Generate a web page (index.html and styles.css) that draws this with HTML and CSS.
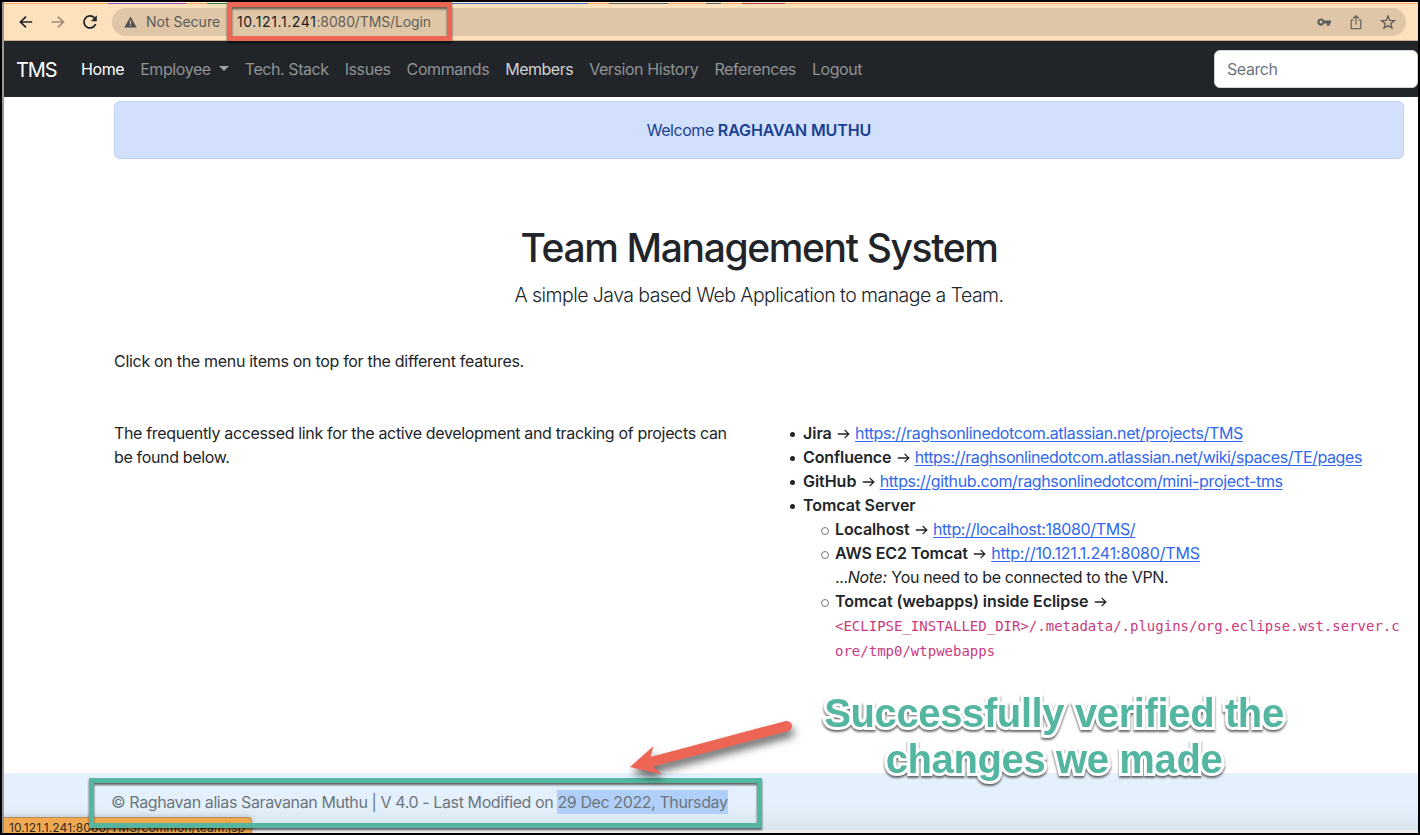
FILE: index.html
```
<!DOCTYPE html>
<html lang="en">
<head>
<meta charset="utf-8">
<title>Team Management System</title>
<link rel="stylesheet" href="styles.css">
</head>
<body>
<div class="window">
  <div class="tab-edge">
    <i class="seg purple"></i><i class="seg green"></i><i class="seg blue"></i><i class="seg gray"></i><i class="seg gray-short"></i><i class="seg red"></i>
  </div>
  <div class="toolbar">
    <svg class="tool-icon" viewBox="0 0 16 16"><path d="M14.2 8H2.6M8 2.6 2.4 8 8 13.4" fill="none" stroke="#222427" stroke-width="1.7"/></svg>
    <svg class="tool-icon" viewBox="0 0 16 16"><path d="M1.6 8h11.6M7.8 2.6 13.4 8l-5.6 5.4" fill="none" stroke="#9a8b79" stroke-width="1.6"/></svg>
    <svg class="tool-icon" viewBox="0 0 16 16"><path d="M13.6 10A6 6 0 1 1 12.4 3.9" fill="none" stroke="#222427" stroke-width="1.8"/><path d="M14.8 1.2v6H8.8z" fill="#222427"/></svg>
    <div class="omnibox">
      <svg class="warn" viewBox="0 0 14 12"><path fill-rule="evenodd" d="M7 0 13.6 12H.4zM6.3 4.3v3.6h1.4V4.3zm0 4.7v1.4h1.4V9z" fill="#4f5257"/></svg>
      <span class="not-secure">Not Secure</span>
      <span class="url"><span class="host">10.121.1.241</span><span class="path">:8080/TMS/Login</span></span>
      <span class="omni-icons">
        <svg width="16" height="16" viewBox="0 0 16 16"><path fill-rule="evenodd" d="M5 4.4A3.6 3.6 0 0 1 8.3 6.5H15v3h-1.3v2.2h-2.8V9.5H8.3A3.6 3.6 0 1 1 5 4.4zM5 6.6A1.4 1.4 0 1 0 5 9.4A1.4 1.4 0 0 0 5 6.6z" fill="#5d5c5c"/></svg>
        <svg width="16" height="16" viewBox="0 0 16 16"><path d="M5.4 6H3.2v8.600h9.600V6h-2.200M8 10.400V2M5.200 4.500 8 1.700l2.800 2.800" fill="none" stroke="#696560" stroke-width="1.25" stroke-linejoin="round"/></svg>
        <svg width="16" height="16" viewBox="0 0 16 16"><path d="m8 2 1.700 4.300 4.700.3-3.600 3 1.150 4.500L8 11.600l-3.950 2.500L5.200 9.600l-3.600-3 4.700-.3z" fill="none" stroke="#605d5a" stroke-width="1.35"/></svg>
      </span>
    </div>
  </div>

  <nav class="navbar">
    <a class="brand">TMS</a>
    <a class="nav-link active">Home</a>
    <a class="nav-link dropdown">Employee</a>
    <a class="nav-link">Tech. Stack</a>
    <a class="nav-link">Issues</a>
    <a class="nav-link">Commands</a>
    <a class="nav-link hovered">Members</a>
    <a class="nav-link">Version History</a>
    <a class="nav-link">References</a>
    <a class="nav-link">Logout</a>
    <div class="search">Search</div>
  </nav>

  <main class="content">
    <div class="alert">Welcome <b>RAGHAVAN MUTHU</b></div>
    <h1>Team Management System</h1>
    <p class="lead">A simple Java based Web Application to manage a Team.</p>
    <p class="intro">Click on the menu items on top for the different features.</p>
    <div class="columns">
      <p class="links-intro">The frequently accessed link for the active development and tracking of projects can<br>be found below.</p>
      <ul>
        <li><b>Jira</b> <svg class="arr" viewBox="0 0 13 10"><path d="M.8 5h11M7.600.9 11.800 5 7.600 9.100"/></svg> <a class="jira">https://raghsonlinedotcom.atlassian.net/projects/TMS</a></li>
        <li><b class="conf">Confluence</b> <svg class="arr" viewBox="0 0 13 10"><path d="M.8 5h11M7.600.9 11.800 5 7.600 9.100"/></svg> <a class="wiki">https://raghsonlinedotcom.atlassian.net/wiki/spaces/TE/pages</a></li>
        <li><b>GitHub</b> <svg class="arr" viewBox="0 0 13 10"><path d="M.8 5h11M7.600.9 11.800 5 7.600 9.100"/></svg> <a class="jira">https://github.com/raghsonlinedotcom/mini-project-tms</a></li>
        <li><b>Tomcat Server</b>
          <ul>
            <li><b class="conf">Localhost</b> <svg class="arr" viewBox="0 0 13 10"><path d="M.8 5h11M7.600.9 11.800 5 7.600 9.100"/></svg> <a>http://localhost:18080/TMS/</a></li>
            <li><b class="aws">AWS EC2 Tomcat</b> <svg class="arr" viewBox="0 0 13 10"><path d="M.8 5h11M7.600.9 11.800 5 7.600 9.100"/></svg> <a class="ec2">http://10.121.1.241:8080/TMS</a><br>...<i>Note:</i> <span class="vpn">You need to be connected to the VPN.</span></li>
            <li><b>Tomcat (webapps) inside Eclipse</b> <svg class="arr" viewBox="0 0 13 10"><path d="M.8 5h11M7.600.9 11.800 5 7.600 9.100"/></svg><br><code>&lt;ECLIPSE_INSTALLED_DIR&gt;/.metadata/.plugins/org.eclipse.wst.server.c<br>ore/tmp0/wtpwebapps</code></li>
          </ul>
        </li>
      </ul>
    </div>
  </main>

  <footer class="footer"><span class="credit">© Raghavan alias Saravanan Muthu | V 4.0 - Last Modified on <mark>29 Dec 2022, Thursday</mark></span></footer>
</div>

<div class="status">10.121.1.241:8080/TMS/common/team.jsp</div>
<div class="callout callout-url"></div>
<div class="callout callout-footer"></div>
<svg class="arrow" viewBox="0 0 200 80"><path d="M20 57 43.500 36 40.500 47 175 11.200A5 5 0 0 1 178.500 21L43.500 56.500 51.500 64.500z" fill="#ec6555"/></svg>
<div class="note">Successfully verified the<br>changes we made</div>
</body>
</html>
```
FILE: styles.css
```
* { box-sizing: border-box; }
body {
  display: flow-root;
  margin: 0;
  width: 1420px;
  height: 835px;
  overflow: hidden;
  position: relative;
  background: #000;
  color: #212529;
  font: 16px/24px Inter, sans-serif;
  letter-spacing: -0.34px;
}
h1, p, ul { margin: 0; }
b { font-weight: 600; letter-spacing: -0.04px; }

.window {
  display: flex;
  flex-direction: column;
  width: 1416px;
  height: 831px;
  margin: 2px;
  border-left: 2px solid #97979a;
  background: #fff;
}

/* browser chrome */
.tab-edge {
  flex: none;
  display: flex;
  height: 2px;
  border-top: 1px solid #fff3e4;
  background: #f8a54b;
}
.seg { height: 1px; }
.purple { margin-left: 104px; width: 78px; background: #9150b5; }
.green { margin-left: 21px; width: 30px; background: #2e7d48; }
.blue { margin-left: 190px; width: 161px; background: #466cc0; }
.gray { margin-left: 21px; width: 59px; background: #625e58; }
.gray-short { margin-left: 38px; width: 15px; background: #5e5b58; }
.red { margin-left: 21px; width: 43px; background: #bb3c31; }
.toolbar {
  flex: none;
  display: flex;
  align-items: center;
  height: 37px;
  padding: 0 12px 0 14px;
  background: #fde0bc;
  border-bottom: 1px solid #c9b18f;
}
.tool-icon { width: 16px; height: 16px; margin-right: 16px; flex: none; }
.tool-icon:nth-child(3) { margin-right: 14px; }
.omnibox {
  flex: 1;
  display: flex;
  align-items: center;
  height: 28px;
  padding: 0 10px 0 12px;
  border-radius: 14px;
  background: #dec6a6;
  font-size: 14px;
  letter-spacing: 0;
}
.warn { width: 13px; height: 12px; margin-right: 9px; }
.not-secure { width: 91px; color: #5c5b59; }
.host { color: #202124; letter-spacing: 0.6px; }
.path { color: #655f57; letter-spacing: -0.13px; }
.omni-icons { display: flex; gap: 16px; margin-left: auto; }

/* site navigation */
.navbar {
  flex: none;
  display: flex;
  align-items: center;
  height: 56px;
  padding-left: 12px;
  background: #212529;
}
.brand { width: 57px; padding-top: 1px; font-size: 20px; letter-spacing: -1.1px; color: #fff; }
.nav-link { margin-left: 8px; padding-right: 8px; color: #909294; letter-spacing: -0.42px; white-space: nowrap; }
.nav-link.active { color: #fff; }
.nav-link.hovered { color: #d0d1d2; letter-spacing: -0.5px; }
.dropdown::after {
  content: "";
  display: inline-block;
  margin-left: 8px;
  vertical-align: 4px;
  border: 5px solid transparent;
  border-top-color: #a0a1a3;
  border-bottom: 0;
}
.search {
  width: 204px;
  height: 38px;
  margin-left: auto;
  padding: 6px 12px;
  border: 1px solid #ced4da;
  border-radius: 6px;
  background: #fff;
  color: #6c757d;
  letter-spacing: -0.42px;
}

/* page */
.content { flex: 1; padding: 4px 14px 0 110px; }
.alert {
  height: 58px;
  padding: 16px;
  border: 1px solid #bbd3f9;
  border-radius: 6px;
  background: #d2e0fb;
  color: #1b3f93;
  letter-spacing: -0.46px;
  text-align: center;
}
.alert b { letter-spacing: -0.1px; }
h1 {
  margin-top: 65px;
  font-size: 39px;
  line-height: 48px;
  font-weight: 500;
  letter-spacing: -1.36px;
  text-align: center;
}
.lead {
  margin-top: 8px;
  font-size: 19.5px;
  line-height: 30px;
  font-weight: 300;
  letter-spacing: -0.56px;
  text-align: center;
}
.intro { margin-top: 39px; letter-spacing: -0.3px; }
.columns { display: grid; grid-template-columns: 657px 1fr; margin-top: 48px; }
ul { padding-left: 32px; list-style: none; }
li { white-space: nowrap; }
li::before {
  content: "";
  float: left;
  width: 5px;
  height: 5px;
  margin: 10.5px 0 0 -13.5px;
  border-radius: 50%;
  background: #212529;
}
ul ul > li::before {
  width: 6px;
  height: 6px;
  margin: 9.5px 0 0 -14.5px;
  border: 1px solid #777;
  background: none;
}
li > a { color: #3068ee; text-decoration: underline; text-underline-offset: 2px; }
.arr { width: 13px; height: 10px; margin: 0 1px; fill: none; stroke: #212529; stroke-width: 1.3; }
.conf { letter-spacing: -0.12px; }
.aws { letter-spacing: -0.12px; }
.wiki { letter-spacing: -0.42px; }
.jira { letter-spacing: -0.36px; }
.ec2 { letter-spacing: -0.17px; }
.vpn { letter-spacing: -0.33px; margin-left: 0.5px; }
code { color: #c93a80; font: 14px/24px "DejaVu Sans Mono", monospace; letter-spacing: 0; }

.footer {
  flex: none;
  height: 60px;
  padding: 17px 0 0 107px;
  border-bottom: 3px solid #eee;
  background: linear-gradient(#e4f1fc 55%, #d9e5ef);
  color: #6c757d;
}
.credit { display: block; line-height: 24px; letter-spacing: -0.4px; white-space: nowrap; }
mark { display: inline-block; background: #b0d0fa; color: #6c757d; }

/* overlays */
.status {
  position: absolute;
  left: 4px;
  top: 817px;
  width: 248px;
  height: 16px;
  padding-left: 5px;
  overflow: hidden;
  border-top: 1px solid #b98a52;
  border-right: 1px solid #b98a52;
  border-top-right-radius: 4px;
  background: #f1a951;
  color: #30291f;
  font-size: 12px;
  line-height: 19px;
  letter-spacing: 0.1px;
  box-shadow: 0 0 6px #0003;
}
.callout { position: absolute; border: 5px solid; filter: drop-shadow(0 2px 1px #0009); }
.callout-url { left: 227px; top: 2px; width: 225px; height: 39px; border-color: #ec6555; }
.callout-footer { left: 89px; top: 778px; width: 673px; height: 50px; border-color: #54b6a0; }
.arrow { position: absolute; left: 610px; top: 710px; width: 200px; height: 80px; overflow: visible; filter: drop-shadow(2px 6px 4px #0009); }
.note {
  position: absolute;
  left: 804px;
  top: 690px;
  width: 500px;
  color: #54b6a0;
  font: bold 40px/46px "Liberation Sans", sans-serif;
  letter-spacing: -0.38px;
  text-align: center;
  -webkit-text-stroke: 6px #fff;
  paint-order: stroke fill;
  filter: drop-shadow(0 2px 1px #0009);
}
```
